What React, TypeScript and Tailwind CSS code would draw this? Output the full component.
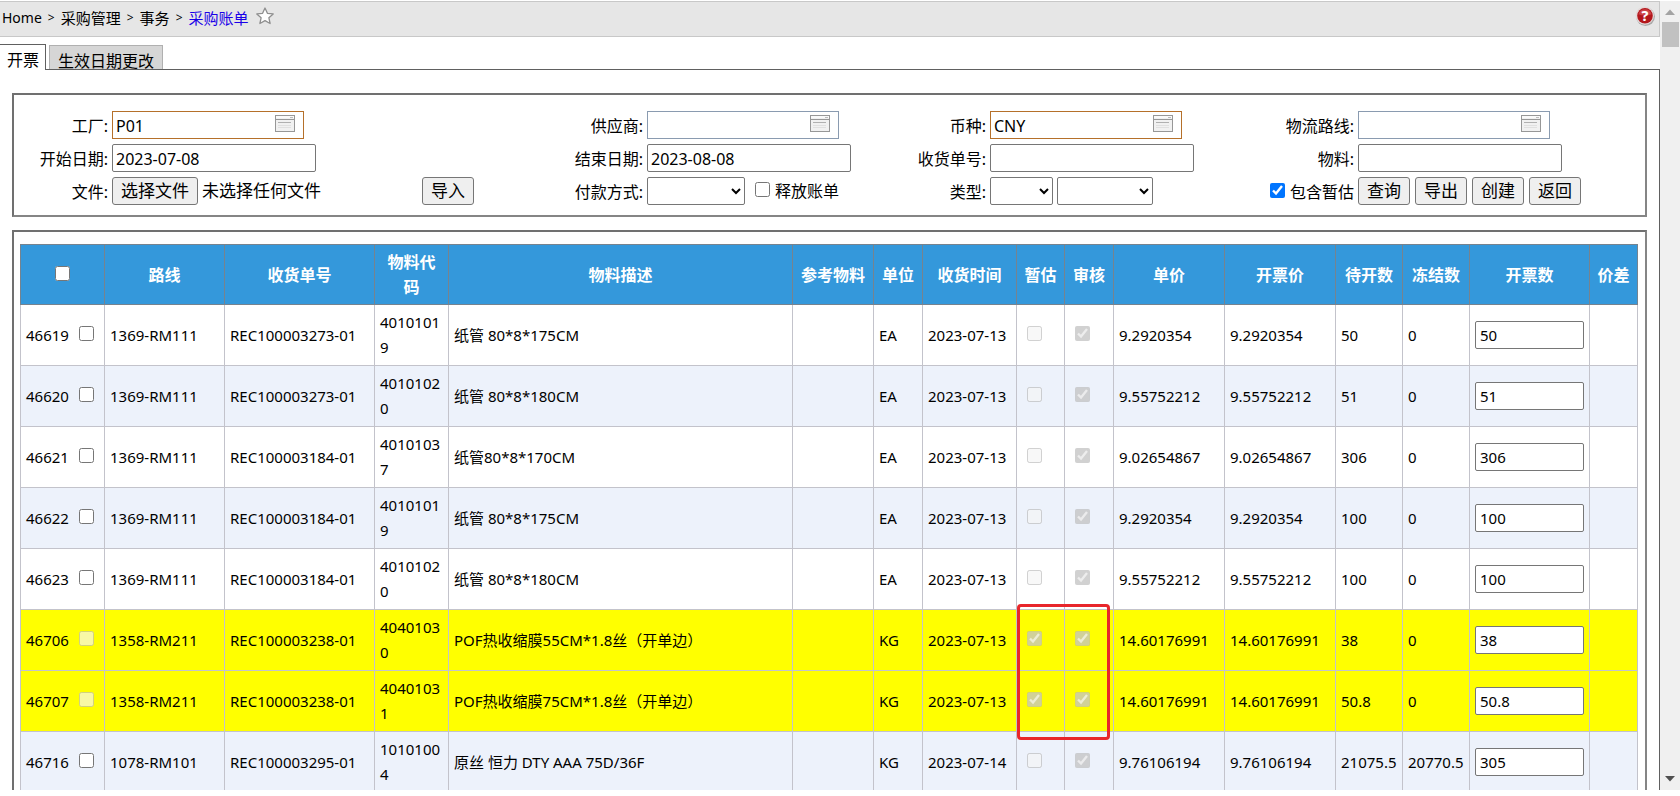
import { useRef, useState } from "react"

type Row = {
    id: string
    route: string
    receipt: string
    code: string
    desc: string
    unit: string
    date: string
    estimated: boolean
    price: string
    pending: string
    frozen: string
    qty: string
    marked?: boolean
}

const initialRows: Row[] = [
    { id: '46619', route: '1369-RM111', receipt: 'REC100003273-01', code: '40101019', desc: '纸管 80*8*175CM', unit: 'EA', date: '2023-07-13', estimated: false, price: '9.2920354', pending: '50', frozen: '0', qty: '50' },
    { id: '46620', route: '1369-RM111', receipt: 'REC100003273-01', code: '40101020', desc: '纸管 80*8*180CM', unit: 'EA', date: '2023-07-13', estimated: false, price: '9.55752212', pending: '51', frozen: '0', qty: '51' },
    { id: '46621', route: '1369-RM111', receipt: 'REC100003184-01', code: '40101037', desc: '纸管80*8*170CM', unit: 'EA', date: '2023-07-13', estimated: false, price: '9.02654867', pending: '306', frozen: '0', qty: '306' },
    { id: '46622', route: '1369-RM111', receipt: 'REC100003184-01', code: '40101019', desc: '纸管 80*8*175CM', unit: 'EA', date: '2023-07-13', estimated: false, price: '9.2920354', pending: '100', frozen: '0', qty: '100' },
    { id: '46623', route: '1369-RM111', receipt: 'REC100003184-01', code: '40101020', desc: '纸管 80*8*180CM', unit: 'EA', date: '2023-07-13', estimated: false, price: '9.55752212', pending: '100', frozen: '0', qty: '100' },
    { id: '46706', route: '1358-RM211', receipt: 'REC100003238-01', code: '40401030', desc: 'POF热收缩膜55CM*1.8丝（开单边）', unit: 'KG', date: '2023-07-13', estimated: true, price: '14.60176991', pending: '38', frozen: '0', qty: '38', marked: true },
    { id: '46707', route: '1358-RM211', receipt: 'REC100003238-01', code: '40401031', desc: 'POF热收缩膜75CM*1.8丝（开单边）', unit: 'KG', date: '2023-07-13', estimated: true, price: '14.60176991', pending: '50.8', frozen: '0', qty: '50.8' },
    { id: '46716', route: '1078-RM101', receipt: 'REC100003295-01', code: '10101004', desc: '原丝 恒力 DTY AAA 75D/36F', unit: 'KG', date: '2023-07-14', estimated: false, price: '9.76106194', pending: '21075.5', frozen: '20770.5', qty: '305' },
]

const headers = ['路线', '收货单号', '物料代码', '物料描述', '参考物料', '单位', '收货时间', '暂估', '审核', '单价', '开票价', '待开数', '冻结数', '开票数', '价差']

const btn = 'h-7 shrink-0 rounded-[3px] border border-[#767676] bg-[#efefef] px-2 text-[17px] whitespace-nowrap hover:bg-[#e5e5e5]'
const cell = 'border border-[#c3c3cb] p-[5px]'
const label = 'flex items-center justify-end pt-[2px] whitespace-nowrap'
const check = 'size-[15px] shrink-0'

function PickerInput({ id, value, required }: { id: string, value: string, required?: boolean }){
    return (
        <div className="relative w-48">
            <input id={id} defaultValue={value} className={`h-7 w-full border bg-white pt-[2px] pl-[3px] pr-8 ${required ? 'border-[#b5702a]' : 'border-[#8a9bb0]'}`} />
            <button type="button" aria-label="选择" className="absolute right-[9px] top-1">
                <svg width="20" height="17" viewBox="0 0 20 17" className="block">
                    <rect x="0.5" y="0.5" width="19" height="16" fill="#f1f1f1" stroke="#979797" />
                    <rect x="1" y="1" width="18" height="2" fill="#fafafa" />
                    <path d="M15 2.5h3" stroke="#bdbdbd" />
                    <path d="M1 4.5h18" stroke="#979797" />
                    <path d="M3 7.5h13" stroke="#b0b0b0" />
                    <path d="M3 10.5h13M3 12.5h13" stroke="#e0e0e0" />
                </svg>
            </button>
        </div>
    )
}

function TextInput({ id, value }: { id: string, value: string }){
    return <input id={id} defaultValue={value} className="h-7 w-[204px] rounded-[2px] border border-[#767676] bg-white px-[3px] pt-[2px]" />
}

function Filters(){
    const fileRef = useRef<HTMLInputElement>(null)

    return (
        <form onSubmit={(e) => e.preventDefault()} className="mx-3 mt-[23px] grid grid-cols-[94fr_362fr_165fr_220fr_115fr_210fr_150fr_287fr] gap-x-1 gap-y-[5px] border-2 border-t-[#707070] border-l-[#707070] border-r-[#858585] border-b-[#858585] pt-4 pb-[10px]">
            <label htmlFor="plant" className={label}>工厂:</label>
            <PickerInput id="plant" value="P01" required />
            <label htmlFor="supplier" className={label}>供应商:</label>
            <PickerInput id="supplier" value="" />
            <label htmlFor="currency" className={label}>币种:</label>
            <PickerInput id="currency" value="CNY" required />
            <label htmlFor="route" className={label}>物流路线:</label>
            <PickerInput id="route" value="" />

            <label htmlFor="start" className={label}>开始日期:</label>
            <TextInput id="start" value="2023-07-08" />
            <label htmlFor="end" className={label}>结束日期:</label>
            <TextInput id="end" value="2023-08-08" />
            <label htmlFor="receipt" className={label}>收货单号:</label>
            <TextInput id="receipt" value="" />
            <label htmlFor="item" className={label}>物料:</label>
            <TextInput id="item" value="" />

            <label htmlFor="file" className={label}>文件:</label>
            <div className="flex items-center">
                <input id="file" ref={fileRef} type="file" className="hidden" />
                <button type="button" onClick={() => fileRef.current?.click()} className={btn}>选择文件</button>
                <span className="ml-1 text-[17px] whitespace-nowrap">未选择任何文件</span>
                <button type="button" className={`${btn} ml-auto`}>导入</button>
            </div>
            <label htmlFor="payment" className={label}>付款方式:</label>
            <div className="flex items-center">
                <select id="payment" className="h-7 w-[98px] rounded-[2px] border border-[#767676] bg-white"><option value=""></option></select>
                <label className="ml-[10px] flex items-center gap-[5px] whitespace-nowrap">
                    <input type="checkbox" className={`${check} mb-1`} />
                    释放账单
                </label>
            </div>
            <label htmlFor="kind" className={label}>类型:</label>
            <div className="flex items-center gap-1">
                <select id="kind" className="h-7 w-[63px] rounded-[2px] border border-[#767676] bg-white"><option value=""></option></select>
                <select aria-label="子类型" className="h-7 w-24 rounded-[2px] border border-[#767676] bg-white"><option value=""></option></select>
            </div>
            <label className={`${label} gap-[5px]`}>
                <input type="checkbox" defaultChecked className={`${check} mb-1`} />
                包含暂估
            </label>
            <div className="flex items-center gap-[5px]">
                <button type="submit" className={btn}>查询</button>
                <button type="button" className={btn}>导出</button>
                <button type="button" className={btn}>创建</button>
                <button type="button" className={btn}>返回</button>
            </div>
        </form>
    )
}

function BillTable(){
    const [rows, setRows] = useState<Row[]>(initialRows)

    function changeQty(id: string, qty: string){
        setRows(rows.map((row) => row.id === id ? { ...row, qty } : row))
    }

    return (
        <div className="mx-3 mt-[13px] border-2 border-b-0 border-t-[#707070] border-l-[#707070] border-r-[#858585] pt-3 pr-[7px] pl-[6px]">
            <table className="w-full table-fixed border-collapse text-[15px] leading-[25px]">
                <colgroup>
                    <col className="w-[84px]" />
                    <col className="w-[120px]" />
                    <col className="w-[150px]" />
                    <col className="w-[74px]" />
                    <col />
                    <col className="w-[81px]" />
                    <col className="w-[49px]" />
                    <col className="w-[94px]" />
                    <col className="w-[48px]" />
                    <col className="w-[49px]" />
                    <col className="w-[111px]" />
                    <col className="w-[111px]" />
                    <col className="w-[67px]" />
                    <col className="w-[67px]" />
                    <col className="w-[120px]" />
                    <col className="w-[48px]" />
                </colgroup>
                <thead>
                    <tr className="bg-[#3498db] text-base leading-[25px] text-white">
                        <th className="border border-[#76838f] px-[5px] pt-[5px] pb-1">
                            <input type="checkbox" aria-label="全选" className={`${check} mx-auto mb-[3px] block`} />
                        </th>
                        {headers.map((name) => (
                            <th key={name} className="border border-[#76838f] px-[5px] pt-[5px] pb-1">{name}</th>
                        ))}
                    </tr>
                </thead>
                <tbody>
                    {rows.map((row) => (
                        <tr key={row.id} className={row.estimated ? 'bg-[#ffff00]' : 'even:bg-[#edf2fb]'}>
                            <td className={cell}>
                                <label className="flex items-center gap-[10px]">
                                    {row.id}
                                    <input type="checkbox" disabled={row.estimated} className={`${check} mb-1`} />
                                </label>
                            </td>
                            <td className={cell}>{row.route}</td>
                            <td className={cell}>{row.receipt}</td>
                            <td className={`${cell} break-all`}>{row.code}</td>
                            <td className={cell}>{row.desc}</td>
                            <td className={cell}></td>
                            <td className={cell}>{row.unit}</td>
                            <td className={`${cell} whitespace-nowrap`}>{row.date}</td>
                            <td className={`${cell} relative`}>
                                <input type="checkbox" aria-label="暂估" disabled checked={row.estimated} readOnly className={`${check} mb-1 ml-[5px] block`} />
                                {row.marked && <div className="pointer-events-none absolute -top-[6px] left-0 z-10 h-[136px] w-[93px] rounded-[4px] border-3 border-[#e8262a]"></div>}
                            </td>
                            <td className={cell}>
                                <input type="checkbox" aria-label="审核" disabled checked readOnly className={`${check} mb-1 ml-[5px] block`} />
                            </td>
                            <td className={cell}>{row.price}</td>
                            <td className={cell}>{row.price}</td>
                            <td className={cell}>{row.pending}</td>
                            <td className={cell}>{row.frozen}</td>
                            <td className={cell}>
                                <input aria-label="开票数" value={row.qty} onChange={(e) => changeQty(row.id, e.target.value)} className="block h-7 w-full rounded-[2px] border border-[#767676] bg-white px-1" />
                            </td>
                            <td className={cell}></td>
                        </tr>
                    ))}
                </tbody>
            </table>
        </div>
    )
}

export default function App(){
    const [tab, setTab] = useState<string>('invoice')

    return (
        <div className="flex h-screen overflow-hidden bg-white pt-px pb-[6px] font-['Noto_Sans','Noto_Sans_CJK_SC',sans-serif] text-base leading-6 text-black">
            <div className="flex min-w-0 flex-1 flex-col overflow-hidden">
                <header className="flex h-9 shrink-0 justify-between border border-l-0 border-[#c8c8c8] bg-[#e6e6e6] pt-1 pl-[2px] text-[15px]">
                    <nav className="flex h-6 items-center gap-[6px]">
                        <a href="#" className="text-sm">Home</a>
                        <span className="text-xs">&gt;</span>
                        <a href="#">采购管理</a>
                        <span className="text-xs">&gt;</span>
                        <a href="#">事务</a>
                        <span className="text-xs">&gt;</span>
                        <a href="#" className="text-[#1a00e8]">采购账单</a>
                        <button type="button" aria-label="收藏" className="mb-1">
                            <svg width="20" height="18" viewBox="0 0 20 18" className="block">
                                <path d="M10 1l2.4 5.3 5.8.6-4.3 3.9 1.2 5.7L10 13.6l-5.1 2.9 1.2-5.7L1.8 6.9l5.8-.6z" fill="#fff" stroke="#8f8f8f" strokeWidth="1.3" strokeLinejoin="round" />
                            </svg>
                        </button>
                    </nav>
                    <button type="button" aria-label="帮助" className="mr-1 h-5">
                        <svg width="20" height="20" viewBox="0 0 20 20" className="block">
                            <circle cx="10.5" cy="10.6" r="9.4" fill="#a9a9a9" />
                            <circle cx="9.8" cy="9.6" r="9.2" fill="#e4dada" />
                            <circle cx="10" cy="9.8" r="7.8" fill="#b3171c" />
                            <path d="M3.4 8.2a6.9 6.9 0 0 1 13.2 0q-6.6 2.6-13.2 0z" fill="#cb4347" />
                            <text x="10" y="15" textAnchor="middle" fontSize="14" fontWeight="800" fill="#fff">?</text>
                        </svg>
                    </button>
                </header>

                <div role="tablist" className="mt-[7px] flex h-[26px] shrink-0 items-end gap-[3px]">
                    <button type="button" role="tab" aria-selected={tab === 'invoice'} onClick={() => setTab('invoice')} className="z-10 h-[26px] border-t border-r border-[#606060] bg-white pt-[5px] pr-[6px] pl-[7px] leading-5 whitespace-nowrap">开票</button>
                    <button type="button" role="tab" aria-selected={tab === 'date'} onClick={() => setTab('date')} className="h-[25px] border border-b-0 border-[#b0b0b0] bg-[#d6d6d6] px-2 pt-[5px] leading-5 whitespace-nowrap">生效日期更改</button>
                </div>

                <main className="-mt-px min-h-0 flex-1 overflow-hidden border-t border-r border-[#606060]">
                    <Filters />
                    <BillTable />
                </main>
            </div>

            <div className="flex w-5 shrink-0 flex-col items-center bg-[#f0f0f0] pt-2 pb-2">
                <svg width="10" height="6" viewBox="0 0 10 6"><path d="M0 6l5-5.5 5 5.5z" fill="#a3a3a3" /></svg>
                <div className="mt-[7px] h-[25px] w-[17px] bg-[#c1c1c1]"></div>
                <svg width="10" height="6" viewBox="0 0 10 6" className="mt-auto"><path d="M0 0l5 5.5L10 0z" fill="#505050" /></svg>
            </div>
        </div>
    )
}
